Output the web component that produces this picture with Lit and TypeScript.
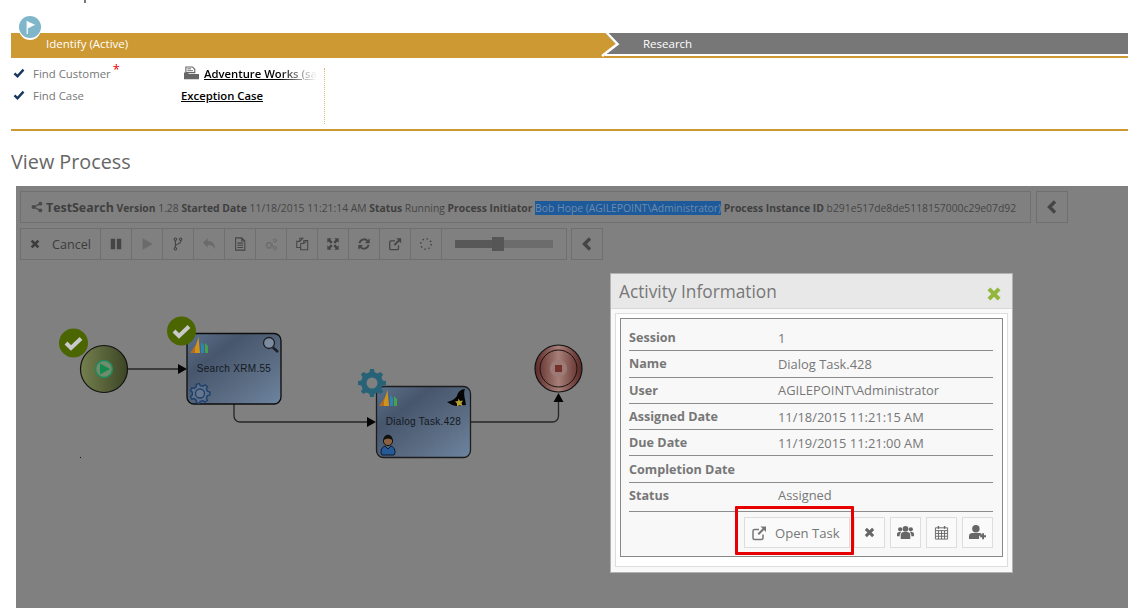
import { LitElement, css, html, svg } from 'lit';
import { customElement } from 'lit/decorators.js';

// icons share a 16x16 box and take their colour from the text
const icons: Record<string, any> = {
  share: svg`<circle cx="12.5" cy="3.5" r="2.6" fill="currentColor"/><circle cx="12.5" cy="12.5" r="2.6" fill="currentColor"/><circle cx="3.5" cy="8" r="2.8" fill="currentColor"/><path d="M12.5 3.5 3.5 8l9 4.5" fill="none" stroke="currentColor" stroke-width="1.6"/>`,
  times: svg`<path d="M3.5 3.5l9 9m0-9-9 9" fill="none" stroke="currentColor" stroke-width="3.6"/>`,
  pause: svg`<path d="M2 2h5v12H2zM9 2h5v12H9z" fill="currentColor"/>`,
  play: svg`<path d="M3 1.5 14.5 8 3 14.5z" fill="currentColor"/>`,
  fork: svg`<g fill="none" stroke="currentColor" stroke-width="1.3"><circle cx="5" cy="2.6" r="1.4"/><circle cx="11" cy="2.6" r="1.4"/><circle cx="5" cy="13.4" r="1.4"/><path d="M5 4v8M11 4v1.5C11 8.5 5 7.5 5 10.5"/></g>`,
  undo: svg`<path d="M1 6.5 6.5 1.5v3c5 0 8.5 2.5 8.5 9.5-1.5-4-4-5-8.5-5v3z" fill="currentColor"/>`,
  file: svg`<path d="M3 1h7l3.5 3.5V15H3zM10 1v3.5h3.5M5 7h6.5M5 9.5h6.5M5 12h6.5" fill="none" stroke="currentColor" stroke-width="1.2"/>`,
  cogs: svg`<g fill="none" stroke="currentColor"><circle cx="6" cy="9.5" r="3" stroke-width="2.4" stroke-dasharray="2 .7"/><circle cx="12.5" cy="4" r="1.7" stroke-width="1.6" stroke-dasharray="1.2 .5"/><circle cx="12.5" cy="12.5" r="1.7" stroke-width="1.6" stroke-dasharray="1.2 .5"/></g>`,
  copy: svg`<path d="M5.5 5V1.5h3.5L5.5 5H2v7h4.5M6.5 7.5h3.5L13.5 4H10v3.5M6.5 7.5V14.5h8V4h-1" fill="none" stroke="currentColor" stroke-width="1.2"/>`,
  expand: svg`<path d="M1.5 1.5h5L5 3l2.6 2.6-2 2L3 5 1.5 6.5zM14.5 1.5v5L13 5l-2.6 2.6-2-2L11 3 9.5 1.5zM14.5 14.5h-5L11 13l-2.6-2.6 2-2L13 11l1.5-1.5zM1.5 14.5v-5L3 11l2.6-2.6 2 2L5 13l1.5 1.5z" fill="currentColor"/>`,
  refresh: svg`<path d="M2.8 7a5.4 5.4 0 0 1 9.2-2.6M13.2 9a5.4 5.4 0 0 1-9.2 2.6" fill="none" stroke="currentColor" stroke-width="2.2"/><path d="M14.5 1.5V7H9zM1.5 14.5V9H7z" fill="currentColor"/>`,
  external: svg`<path d="M12 9.5V13a1.5 1.5 0 0 1-1.5 1.5h-7A1.5 1.5 0 0 1 2 13V6a1.5 1.5 0 0 1 1.5-1.5H8" fill="none" stroke="currentColor" stroke-width="1.5"/><path d="M9.5 1.5H15V7l-2-2-5 5-1.5-1.5 5-5z" fill="currentColor"/>`,
  spinner: svg`<circle cx="8" cy="8" r="6" fill="none" stroke="currentColor" stroke-width="1.8" stroke-dasharray="1.6 3.1"/>`,
  left: svg`<path d="M11 2.5 5.5 8l5.5 5.5" fill="none" stroke="currentColor" stroke-width="3.4"/>`,
  users: svg`<circle cx="8" cy="4.5" r="2.7" fill="currentColor"/><circle cx="3" cy="5" r="2" fill="currentColor"/><circle cx="13" cy="5" r="2" fill="currentColor"/><path d="M3.5 14V10a3 3 0 0 1 3-2.5h3a3 3 0 0 1 3 2.5v4zM0 11.5V9.5C0 8.3 1 7.6 2 7.6h1.8L2.5 10v1.500zM16 11.5V9.5c0-1.200-1-1.900-2-1.900h-1.800l1.300 2.400v1.500z" fill="currentColor"/>`,
  calendar: svg`<path d="M1.5 3h13v12h-13zM1.5 6h13M1.5 9h13M1.5 12h13M4.75 6v9M8 6v9M11.25 6v9" fill="none" stroke="currentColor" stroke-width="1"/><path d="M4 1h1.5v3H4zM10.5 1H12v3h-1.5z" fill="currentColor"/>`,
  useradd: svg`<circle cx="6.5" cy="4.5" r="3.5" fill="currentColor"/><path d="M0 14v-2.500c0-2 1.500-3 3-3h7c.8 0 1.500.3 2 .8V11H9.500v3z" fill="currentColor"/><path d="M10.500 11.500H16M13.250 8.800v5.500" stroke="currentColor" stroke-width="1.800"/>`,
  check: svg`<path d="M2 8.500 6 12.500 14 3.500" fill="none" stroke="currentColor" stroke-width="3.200"/>`,
  flag: svg`<path d="M4.500 1v14" stroke="currentColor" stroke-width="1.300"/><path d="M5 1.500 13 5 5 9z" fill="currentColor"/>`,
  lookup: svg`<path d="M2 1h7l2.500 2.500V7H2z" fill="none" stroke="currentColor" stroke-width="1.200"/><path d="M3.500 3h4M3.500 5h6" stroke="currentColor"/><path d="M0 7h4l1 1.500h11V14H0z" fill="currentColor"/>`,
};

const ico = (name: string, size = 14) =>
  html`<svg class="ico" width=${size} height=${size} viewBox="0 0 16 16">${icons[name]}</svg>`;

const tools = [
  { icon: 'pause' },
  { icon: 'play', off: true },
  { icon: 'fork' },
  { icon: 'undo', off: true },
  { icon: 'file' },
  { icon: 'cogs', off: true },
  { icon: 'copy' },
  { icon: 'expand' },
  { icon: 'refresh' },
  { icon: 'external' },
  { icon: 'spinner' },
];

const details = [
  ['Session', '1'],
  ['Name', 'Dialog Task.428'],
  ['User', 'AGILEPOINT\\Administrator'],
  ['Assigned Date', '11/18/2015 11:21:15 AM'],
  ['Due Date', '11/19/2015 11:21:00 AM'],
  ['Completion Date', ''],
  ['Status', 'Assigned'],
];

// toothed outline for the gears on the task nodes
const gearPath = (cx: number, cy: number, outer: number, inner: number, teeth: number) => {
  const pts: string[] = [];
  const step = (Math.PI * 2) / teeth;
  for (let i = 0; i < teeth; i++) {
    const a = i * step;
    [[-0.3, inner], [-0.17, outer], [0.17, outer], [0.3, inner]].forEach(([f, r]) => {
      const t = a + f * step;
      pts.push(`${(cx + Math.cos(t) * r).toFixed(1)} ${(cy + Math.sin(t) * r).toFixed(1)}`);
    });
  }
  return `M${pts.join('L')}z`;
};

const okBadge = (cx: number, cy: number) =>
  svg`<circle cx=${cx} cy=${cy} r="14.5" fill="#4b6500"/>
    <path d=${`M${cx - 7.5} ${cy}l5 5 10-9.500`} fill="none" stroke="#c9c9c9" stroke-width="4"/>`;

const crmLogo = (x: number, y: number) =>
  svg`<g transform=${`translate(${x} ${y})`}>
    <path d="M0 16 7 6 8 16z" fill="#b56c1e"/><path d="M5 11 8.500 0 10 16 5 16z" fill="#cf9420"/>
    <path d="M11 5 14 8 14 16 11 16z" fill="#2f86ad"/><path d="M15 6 18 9 18 16 15 16z" fill="#46a052"/>
  </g>`;

@customElement('app-root')
export class AppRoot extends LitElement {
  static styles = css`
    :host {
      display: block;
      position: relative;
      width: 1128px;
      height: 608px;
      overflow: hidden;
      background: #fff;
      font-family: 'Open Sans', 'Liberation Sans', sans-serif;
    }
    .ico { display: block; flex: none; }
    .cut { height: 3px; width: 2px; margin-left: 84px; background: #777; }

    .process { margin: 30px 0 0 11px; }
    .stages { position: relative; display: flex; height: 25px; background: #cc9933; }
    .stage { font-size: 11.5px; line-height: 22px; color: #fff; }
    .stage.active { width: 594px; padding-left: 35px; box-sizing: border-box; flex: none; }
    .stage.next { flex: 1; margin-bottom: 2px; border-bottom: 2px solid #fff; background: #777; padding-left: 38px; }
    .arrow { flex: none; width: 0; position: relative; }
    .arrow svg { position: absolute; left: 0; top: 0; overflow: visible; }
    .flag {
      position: absolute; left: 8px; top: -17px; width: 22px; height: 22px;
      display: flex; align-items: center; justify-content: center;
      border-radius: 50%; background: #7fb6c9; color: #fff;
      box-shadow: 0 2px 0 #fff;
    }

    .fields { display: flex; height: 71px; border-bottom: 2px solid #cc9933; }
    .fields-main { width: 314px; height: 56px; margin-top: 10px; border-right: 1px dotted #d9b679; box-sizing: border-box; }
    .rows { margin-top: -6px; }
    .field { display: flex; height: 22px; align-items: center; }
    .tick { width: 22px; padding-left: 2px; box-sizing: border-box; color: #17375e; }
    .name { width: 148px; font-size: 11.4px; color: #777; }
    .req { color: #e00; font-size: 13px; position: relative; top: -4px; margin-left: 2px; }
    .value { display: flex; align-items: center; gap: 5px; color: #666; white-space: nowrap; }
    .value .ico { margin-left: 3px; }
    .value a { font-size: 11.3px; font-weight: 600; color: #000; text-decoration: underline; }
    .value a.fade { -webkit-mask-image: linear-gradient(90deg, #000 66%, transparent 100%); }

    h2 { margin: 18px 0 0 11px; font-size: 19.8px; line-height: 26px; font-weight: 400; color: #666; }

    .stage-area {
      position: absolute; left: 16px; right: 0; top: 186px; bottom: 0;
      background: #808080; padding: 5px 0 0 4px; box-sizing: border-box; color: #454545;
    }
    .row { display: flex; gap: 5px; }
    .info {
      width: 1011px; height: 32px; box-sizing: border-box; padding-left: 10px;
      display: flex; align-items: center; gap: 3px;
      border: 1px solid #707070; font-size: 10.35px; white-space: pre;
    }
    .info b { font-weight: 700; color: #3f3f3f; }
    .info b.big { font-size: 12.4px; }
    .info .sel { background: #1d5a9b; color: #6f8bab; }
    .box {
      width: 32px; height: 32px; box-sizing: border-box; display: flex; align-items: center; justify-content: center;
      border: 1px solid #6f6f6f; color: #454545;
    }
    .tools { height: 32px; display: flex; margin-top: 5px; gap: 4px; }
    .toolbar { display: flex; width: 547px; box-sizing: border-box; border: 1px solid #6f6f6f; }
    .cancel { width: 80px; display: flex; align-items: center; gap: 11px; padding-left: 8px; box-sizing: border-box; font-size: 12.6px; color: #3c3c3c; border-right: 1px solid #6f6f6f; }
    .tool { width: 31px; display: flex; align-items: center; justify-content: center; box-sizing: border-box; border-right: 1px solid #6f6f6f; color: #454545; }
    .tool.off { color: #6b6b6b; }
    .slider { flex: 1; display: flex; align-items: center; padding: 0 13px; }
    .track { flex: 1; height: 8px; background: #6c6c6c; position: relative; }
    .track i { position: absolute; left: 0; top: 0; bottom: 0; width: 37px; background: #585858; }
    .track u { position: absolute; left: 37px; top: -3px; width: 12px; height: 14px; background: #565656; }
    .canvas { display: block; position: absolute; left: 0; top: 78px; }
    .canvas text { font: 10px 'Liberation Sans', sans-serif; fill: #14181f; text-anchor: middle; letter-spacing: .3px; }

    .modal {
      position: absolute; left: 610px; top: 273px; width: 403px; height: 300px; box-sizing: border-box;
      border: 1px solid #b2b2b2; background: #f9f9f9;
    }
    .modal-head {
      height: 35px; background: #e8e8e8; border-bottom: 1px solid #d8d8d8; box-sizing: border-box;
      display: flex; align-items: center; justify-content: space-between; padding: 0 9px 0 8px;
      font-size: 17.3px; color: #777;
    }
    .modal-head span { color: #93b63c; margin-top: 6px; }
    .ring { margin: 4px 4px 0; height: 254px; border: 1px solid #ddd; background: #fff; padding: 4px; box-sizing: border-box; }
    .panel { height: 239px; box-sizing: border-box; border: 1px solid #888; background: #f8f8f8; padding: 6px 9px 0 8px; position: relative; }
    .line { display: flex; align-items: center; height: 26.3px; border-bottom: 1px solid #8c8c8c; box-sizing: border-box; font-size: 12.9px; color: #777; }
    .line.status { height: 29px; padding-bottom: 3px; }
    .line b { width: 149px; font-weight: 700; font-size: 12.6px; }
    .actions { display: flex; justify-content: flex-end; gap: 5px; margin-top: 5px; }
    .btn {
      width: 31px; height: 31px; box-sizing: border-box; border: 1px solid #ddd; background: #fafafa;
      display: flex; align-items: center; justify-content: center; color: #666;
    }
    .btn.wide { width: 106px; gap: 8px; font-size: 13.1px; color: #777; justify-content: flex-start; padding: 2px 0 0 6px; margin-right: -1px; }
    .mark { position: absolute; left: 114px; top: 187px; width: 119px; height: 49px; box-sizing: border-box; border: 3px solid #e80000; border-radius: 1px; }
  `;

  render() {
    return html`
      <div class="cut"></div>
      <div class="process">
        <div class="stages">
          <div class="flag">${ico('flag', 15)}</div>
          <div class="stage active">Identify (Active)</div>
          <div class="arrow">
            <svg width="16" height="24" viewBox="0 0 16 24">
              <path d="M0 0 11 11 0 22z" fill="#cc9933"/>
              <path d="M1-1 12.5 11-3 23" fill="none" stroke="#fff" stroke-width="2.5"/>
            </svg>
          </div>
          <div class="stage next">Research</div>
        </div>
        <div class="fields">
          <div class="fields-main">
            <div class="rows">
              <div class="field">
                <span class="tick">${ico('check', 12)}</span>
                <span class="name">Find Customer<span class="req">*</span></span>
                <span class="value">${ico('lookup', 15)}<a class="fade">Adventure Works (sa</a></span>
              </div>
              <div class="field">
                <span class="tick">${ico('check', 12)}</span>
                <span class="name">Find Case</span>
                <span class="value"><a>Exception Case</a></span>
              </div>
            </div>
          </div>
        </div>
      </div>
      <h2>View Process</h2>

      <div class="stage-area">
        <div class="row">
          <div class="info">
            <span style="color:#4a4a4a">${ico('share', 12)}</span>
            <span><b class="big">TestSearch</b> <b>Version</b> 1.28 <b>Started Date</b> 11/18/2015 11:21:14 AM <b>Status</b> Running <b>Process Initiator</b> <span class="sel">Bob Hope (AGILEPOINT\\Administrator)</span> <b>Process Instance ID</b> b291e517de8de5118157000c29e07d92</span>
          </div>
          <div class="box">${ico('left', 16)}</div>
        </div>
        <div class="tools">
          <div class="toolbar">
            <div class="cancel">${ico('times', 12)}<span>Cancel</span></div>
            ${tools.map(t => html`<div class="tool ${t.off ? 'off' : ''}">${ico(t.icon, 14)}</div>`)}
            <div class="slider"><div class="track"><i></i><u></u></div></div>
          </div>
          <div class="box">${ico('left', 16)}</div>
        </div>
        ${this.renderDiagram()}
      </div>

      <div class="modal">
        <div class="modal-head">Activity Information<span>${ico('times', 18)}</span></div>
        <div class="ring">
          <div class="panel">
            ${details.map(([k, v]) => html`
              <div class="line ${k === 'Status' ? 'status' : ''}"><b>${k}</b><span>${v}</span></div>`)}
            <div class="actions">
              <div class="btn wide">${ico('external', 16)}<span>Open Task</span></div>
              <div class="btn">${ico('times', 13)}</div>
              <div class="btn">${ico('users', 17)}</div>
              <div class="btn">${ico('calendar', 15)}</div>
              <div class="btn">${ico('useradd', 17)}</div>
            </div>
            <div class="mark"></div>
          </div>
        </div>
      </div>
    `;
  }

  // drawn in page coordinates through the viewBox, the nodes are free canvas
  renderDiagram() {
    return html`<svg class="canvas" width="1112" height="344" viewBox="16 264 1112 344">
      <defs>
        <linearGradient id="startFill"><stop offset="0" stop-color="#74804f"/><stop offset="1" stop-color="#3c4524"/></linearGradient>
        <linearGradient id="taskFill" x1="0" y1="0" x2="1" y2="1"><stop offset="0" stop-color="#5c718c"/><stop offset=".3" stop-color="#47566c"/><stop offset=".7" stop-color="#5d6f86"/><stop offset="1" stop-color="#6d84a0"/></linearGradient>
        <linearGradient id="endFill"><stop offset="0" stop-color="#5c2a27"/><stop offset=".5" stop-color="#a77f79"/><stop offset="1" stop-color="#5a2825"/></linearGradient>
      </defs>

      <g fill="none" stroke="#262626" stroke-width="1.3">
        <path d="M128 369H179"/>
        <path d="M234 404V416a6 6 0 0 0 6 6H368"/>
        <path d="M471 422H552a6 6 0 0 0 6.5-6V401"/>
      </g>
      <path d="M187 369l-9-5v10zM376 422l-9-5v10zM558.5 393l-5 9h10z" fill="#050505"/>

      <circle cx="104" cy="369" r="23.5" fill="url(#startFill)" stroke="#111" stroke-width="1.2"/>
      <circle cx="104" cy="369" r="8.5" fill="#6f8d6c" stroke="#1d8a5c" stroke-width="1.5"/>
      <path d="M100 363.5 110 369 100 374.5z" fill="#148a4e"/>
      ${okBadge(73.5, 343)}

      <rect x="187" y="333.5" width="94" height="70.5" rx="7" fill="url(#taskFill)" stroke="#0d0d0d" stroke-width="1.3"/>
      ${crmLogo(190, 337)}
      ${okBadge(181.5, 331)}
      <circle cx="269" cy="343" r="5.5" fill="#7c8ba0" stroke="#1c1f24" stroke-width="1.3"/>
      <path d="M273 347.5 278 352" stroke="#1c1f24" stroke-width="2.5"/>
      <path d=${gearPath(200, 393.5, 10, 7.8, 7)} fill="#5d7088" stroke="#1f3f6c" stroke-width="1.4"/>
      <circle cx="200" cy="393.5" r="4.5" fill="#64778e" stroke="#1f3f6c" stroke-width="1.3"/>
      <text x="234" y="372">Search XRM.55</text>

      <rect x="376.5" y="386.5" width="94" height="71" rx="7" fill="url(#taskFill)" stroke="#1d1d1d" stroke-width="1.3"/>
      ${crmLogo(379, 390)}
      <path d=${gearPath(372, 383, 14, 11, 8)} fill="#276277"/>
      <circle cx="372" cy="383" r="5.5" fill="#808080"/>
      <path d="M447 402C452 401 455 399 457 396 458 392 461 389 465 389 463 393 465 398 466 405L456 406Q451 405 447 402z" fill="#050505"/>
      <path d="M458.5 398.5l1.500 2.500 3-.5-1.500 2.500 1 3-3-1-2.500 1.500v-3l-2-2 3-.5z" fill="#b8a030"/>
      <circle cx="388" cy="441" r="4.6" fill="#8a6240" stroke="#111"/>
      <path d="M383.5 440c0-7 9-7 9 0-3-2-6-2-9 0z" fill="#111"/>
      <path d="M382 455c-2-2-1-8 3-9l3 3 3-3c4 1 5 7 3 9z" fill="#245a98" stroke="#10182a" stroke-width="1"/>
      <text x="423.5" y="425">Dialog Task.428</text>

      <circle cx="558.5" cy="368.5" r="23.5" fill="url(#endFill)" stroke="#111" stroke-width="1.2"/>
      <circle cx="558.5" cy="368.5" r="18.5" fill="none" stroke="#1a0f0e" stroke-width="1"/>
      <circle cx="558.5" cy="368.5" r="8.5" fill="#9c7a75"/>
      <rect x="555" y="365" width="7" height="7" fill="#74302b"/>

      <rect x="80" y="457" width="1" height="1" fill="#111"/>
    </svg>`;
  }
}
